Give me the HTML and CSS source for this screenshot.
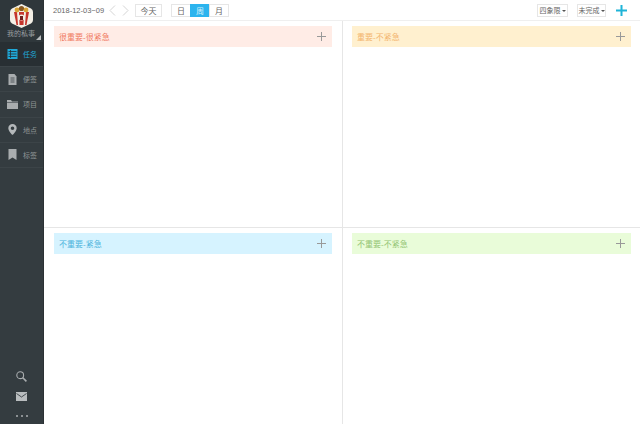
FILE: index.html
```html
<!DOCTYPE html>
<html lang="zh-CN">
  <head>
    <meta charset="UTF-8" />
    <title>四象限</title>
    <link rel="stylesheet" href="styles.css">
  </head>
  <body>
    <aside class="sidebar">
      <div class="profile">
        <svg class="avatar" width="23" height="24" viewBox="0 0 23 24">
          <path d="M11.5 0L21 4.5Q23 5.5 23 8V16Q23 18.500 21 19.500L11.500 24L2 19.500Q0 18.500 0 16V8Q0 5.500 2 4.500Z" fill="#f3efe6" />
          <path d="M4 8H19L16.500 21H6.500Z" fill="#c5342c" />
          <path d="M7 8H9L9.500 21H8ZM14 8H16L15 21H13.500Z" fill="#f3efe6" />
          <circle cx="7" cy="6" r="2.400" fill="#d9a335" />
          <circle cx="11.500" cy="4.500" r="2.600" fill="#8a5a22" />
          <circle cx="16" cy="6" r="2.400" fill="#d9a335" />
          <circle cx="11.500" cy="13.500" r="3" fill="#f3efe6" />
          <rect x="10" y="12" width="3" height="4" fill="#6f201d" />
        </svg>
        <span class="profile-name">我的私事</span>
        <span class="profile-corner"></span>
      </div>
      <nav class="menu">
        <a class="menu-item active" href="#">
          <svg width="10" height="10" viewBox="0 0 10 10">
            <path d="M0 0H10V10H0Z" fill="#1fa8d8" />
            <path d="M1 2.500H9M1 5H9M1 7.500H9M3 1V9" stroke="#233038" stroke-width="0.800" />
          </svg>
          <span>任务</span>
        </a>
        <a class="menu-item" href="#">
          <svg width="10" height="11" viewBox="0 0 10 11">
            <path d="M1 0H7L9 2.500V11H1Z" fill="#a9adaf" />
            <path d="M3 4H7M3 6H7M3 8H7" stroke="#3a4246" stroke-width="0.800" />
          </svg>
          <span>便签</span>
        </a>
        <a class="menu-item" href="#">
          <svg width="11" height="9" viewBox="0 0 11 9">
            <path d="M0 0H4L5 1.500H11V9H0Z" fill="#a9adaf" />
            <path d="M0 2.500H11" stroke="#3a4246" stroke-width="0.600" />
          </svg>
          <span>项目</span>
        </a>
        <a class="menu-item" href="#">
          <svg width="9" height="11" viewBox="0 0 9 11">
            <path fill-rule="evenodd" d="M4.500 0A4.200 4.200 0 0 1 8.700 4.200C8.700 7 4.500 11 4.500 11S0.300 7 0.300 4.200A4.200 4.200 0 0 1 4.500 0ZM4.500 2.400A1.800 1.800 0 1 0 4.500 6A1.800 1.800 0 1 0 4.500 2.400Z" fill="#b4b8ba" />
          </svg>
          <span>地点</span>
        </a>
        <a class="menu-item" href="#">
          <svg width="8" height="11" viewBox="0 0 8 11">
            <path d="M0 0H8V11L4 8.500L0 11Z" fill="#a9adaf" />
          </svg>
          <span>标签</span>
        </a>
      </nav>
      <div class="side-tools">
        <svg width="11" height="11" viewBox="0 0 11 11">
          <circle cx="4.200" cy="4.200" r="3.400" fill="none" stroke="#a9adaf" stroke-width="1.100" />
          <path d="M6.800 6.800L10.400 10.400" stroke="#a9adaf" stroke-width="1.600" />
        </svg>
        <svg width="11" height="9" viewBox="0 0 11 9">
          <path d="M0 0H11V9H0Z" fill="#b9bdbf" />
          <path d="M0.500 1.500L5.500 5L10.500 1.500" fill="none" stroke="#3a4246" stroke-width="0.900" />
        </svg>
        <span class="more-dots"><i></i><i></i><i></i></span>
      </div>
    </aside>

    <main class="content">
      <header class="toolbar">
        <span class="date-range">2018-12-03~09</span>
        <svg class="arrow" width="7" height="11" viewBox="0 0 7 11">
          <path d="M6 0.500L1 5.500L6 10.500" fill="none" stroke="#d4d4d4" />
        </svg>
        <svg class="arrow" width="7" height="11" viewBox="0 0 7 11">
          <path d="M1 0.500L6 5.500L1 10.500" fill="none" stroke="#d4d4d4" />
        </svg>
        <button class="btn today-btn">今天</button>
        <div class="view-switch">
          <button>日</button>
          <button class="current">周</button>
          <button>月</button>
        </div>
        <div class="toolbar-right">
          <button class="btn select-btn">四象限<b class="caret"></b></button>
          <button class="btn select-btn status-btn">未完成<b class="caret"></b></button>
          <svg class="add-icon" width="11" height="11" viewBox="0 0 11 11">
            <path d="M5.500 0V11M0 5.500H11" stroke="#1fb4d8" stroke-width="2" />
          </svg>
        </div>
      </header>

      <section class="quadrants">
        <div class="quadrant">
          <div class="quad-head red"><span>很重要-很紧急</span><em class="plus"></em></div>
        </div>
        <div class="quadrant">
          <div class="quad-head orange"><span>重要-不紧急</span><em class="plus"></em></div>
        </div>
        <div class="quadrant">
          <div class="quad-head blue"><span>不重要-紧急</span><em class="plus"></em></div>
        </div>
        <div class="quadrant">
          <div class="quad-head green"><span>不重要-不紧急</span><em class="plus"></em></div>
        </div>
      </section>
    </main>
  </body>
</html>
```

FILE: styles.css
```css
* {
  margin: 0;
  padding: 0;
  box-sizing: border-box;
}

html,
body {
  height: 100%;
  overflow: hidden;
}

body {
  display: flex;
  font-family: "Liberation Sans", "Noto Sans CJK SC", sans-serif;
  background-color: #fff;
  color: #555;
}

.sidebar {
  width: 44px;
  flex-shrink: 0;
  display: flex;
  flex-direction: column;
  background-color: #343c40;
  border-right: 1px solid #2b3134;
}

.profile {
  position: relative;
  height: 42px;
  padding-top: 4px;
  display: flex;
  flex-direction: column;
  align-items: center;
  background-color: #2f373b;
}

.avatar {
  display: block;
  margin-left: -1px;
}

.profile-name {
  font-size: 7px;
  line-height: 9px;
  margin-top: 1px;
  margin-left: -1px;
  color: #9a9ea0;
  white-space: nowrap;
}

.profile-corner {
  position: absolute;
  right: 2px;
  bottom: 2px;
  width: 0;
  height: 0;
  border-left: 5px solid transparent;
  border-bottom: 5px solid #b9bdbf;
}

.menu-item {
  height: 25.2px;
  display: flex;
  align-items: center;
  padding-left: 7px;
  gap: 5px;
  font-size: 7px;
  color: #8f9496;
  text-decoration: none;
  border-bottom: 1px solid #3c4448;
}

.menu-item svg {
  width: 11px;
  flex-shrink: 0;
}

.menu-item.active {
  background-color: #282f33;
  color: #1fa8d8;
}

.side-tools {
  margin-top: auto;
  padding-bottom: 6px;
  display: flex;
  flex-direction: column;
  align-items: center;
  gap: 10px;
}

.more-dots {
  display: flex;
  gap: 3px;
  height: 3px;
  margin-top: 4px;
}

.more-dots i {
  width: 2px;
  height: 2px;
  background-color: #a9adaf;
  border-radius: 50%;
}

.content {
  flex: 1;
  display: flex;
  flex-direction: column;
  min-width: 0;
}

.toolbar {
  height: 21px;
  flex-shrink: 0;
  display: flex;
  align-items: center;
  padding-left: 9px;
  padding-right: 13px;
  border-bottom: 1px solid #efefef;
}

.date-range {
  font-size: 7.5px;
  color: #666;
  margin-right: 5px;
}

.arrow {
  margin-right: 6px;
}

.btn,
.view-switch button {
  font-family: inherit;
  font-size: 8px;
  background-color: #fff;
  color: #666;
  border: 1px solid #e6e6e6;
  cursor: pointer;
}

.today-btn {
  width: 27px;
  height: 13px;
  margin-right: 10px;
}

.view-switch {
  display: flex;
}

.view-switch button {
  width: 20px;
  height: 13px;
  margin-left: -1px;
}

.view-switch .current {
  background-color: #2cb4ee;
  border-color: #2cb4ee;
  color: #d6f0fb;
}

.toolbar-right {
  margin-left: auto;
  display: flex;
  align-items: center;
  gap: 9px;
}

.select-btn {
  width: 31px;
  height: 13px;
  font-size: 7px;
  white-space: nowrap;
}

.status-btn {
  width: 29px;
}

.add-icon {
  margin-left: 1px;
}

.caret {
  display: inline-block;
  margin-left: 1px;
  vertical-align: middle;
  border-left: 2px solid transparent;
  border-right: 2px solid transparent;
  border-top: 2px solid #555;
}

.quadrants {
  flex: 1;
  display: grid;
  grid-template-columns: 299px 297px;
  grid-template-rows: 207px 1fr;
}

.quadrant {
  padding: 5px 10px 0;
  border-right: 1px solid #e6e6e6;
  border-bottom: 1px solid #e6e6e6;
}

.quadrant:nth-child(even) {
  padding-left: 9px;
  padding-right: 9px;
  border-right: none;
}

.quadrant:nth-child(n + 3) {
  border-bottom: none;
}

.quad-head {
  height: 21px;
  display: flex;
  align-items: center;
  justify-content: space-between;
  padding: 0 6px 0 5px;
  font-size: 8px;
}

.plus {
  position: relative;
  width: 9px;
  height: 9px;
}

.plus::before,
.plus::after {
  content: "";
  position: absolute;
  background-color: #999;
}

.plus::before {
  left: 0;
  top: 4px;
  width: 9px;
  height: 1px;
}

.plus::after {
  left: 4px;
  top: 0;
  width: 1px;
  height: 9px;
}

.red {
  background-color: #ffece6;
  color: #f0795f;
}

.orange {
  background-color: #fff0cf;
  color: #f3b56e;
}

.blue {
  background-color: #d6f3ff;
  color: #4db4dc;
}

.green {
  background-color: #e9fcd9;
  color: #93c473;
}
```
